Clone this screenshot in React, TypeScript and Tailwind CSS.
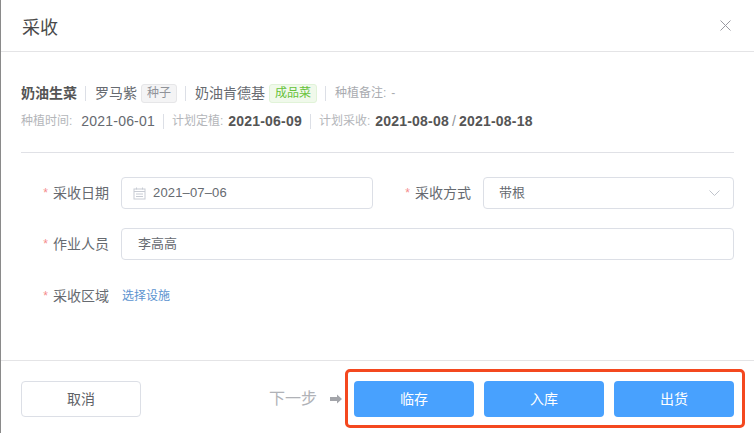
import React from 'react';

const FONT = "font-['Liberation_Sans','Noto_Sans_CJK_SC',sans-serif]";

const Sep = () => <span className="ml-[8px] mr-[9px] h-[15px] w-px bg-[#dcdfe6]" />;
const DateSep = () => <span className="ml-[8px] mr-[8px] h-[15px] w-px bg-[#dcdfe6]" />;

const Label = ({ text }: { text: string }) => (
  <div className="flex w-[88px] shrink-0 items-center justify-end pr-[12px] text-[14px] text-[#666a70]">
    <span className="mr-[5px] text-[12px] text-[#f58c8c]">*</span>
    {text}
  </div>
);

const App: React.FC = () => {
  return (
    <div className={`${FONT} flex h-[433px] w-[754px] flex-col overflow-hidden border-l border-[#8a8a8a] bg-white text-[#666a70]`}>
      <div className="flex h-[52px] shrink-0 items-center justify-between border-b border-[#e4e4e6] pl-[21px] pr-[23px]">
        <h1 className="pt-[5px] text-[18px] font-normal text-[#4a4a4a]">采收</h1>
        <svg width="11" height="11" viewBox="0 0 11 11" className="text-[#9a9aa2]">
          <path d="M0.5 0.5L10.5 10.5M10.5 0.5L0.5 10.5" stroke="currentColor" strokeWidth="1" fill="none" />
        </svg>
      </div>

      <div className="mx-[20px] shrink-0 border-b border-[#e0e1e6] pb-[19px] pt-[29px]">
        <div className="flex h-[24px] items-center text-[14px]">
          <span className="font-bold text-[#555]">奶油生菜</span>
          <Sep />
          <span>罗马紫</span>
          <span className="ml-[4px] flex h-[19px] w-[36px] items-center justify-center rounded-[3px] border border-[#e6e6e8] bg-[#f4f4f5] text-[12px] text-[#909399]">种子</span>
          <Sep />
          <span>奶油肯德基</span>
          <span className="ml-[4px] flex h-[19px] w-[48px] items-center justify-center rounded-[3px] border border-[#e1f3d8] bg-[#f0f9eb] text-[12px] text-[#67c23a]">成品菜</span>
          <Sep />
          <span className="text-[12px] text-[#a9abb0]">种植备注:</span>
          <span className="ml-[5px] text-[12px] text-[#a9abb0]">-</span>
        </div>
        <div className="mt-[4px] flex h-[24px] items-center text-[14px] tracking-[0.2px]">
          <span className="text-[12px] tracking-normal text-[#b4b6ba]">种植时间:</span>
          <span className="ml-[9px]">2021-06-01</span>
          <DateSep />
          <span className="text-[12px] tracking-normal text-[#b4b6ba]">计划定植:</span>
          <span className="ml-[5px] font-bold text-[#555]">2021-06-09</span>
          <DateSep />
          <span className="text-[12px] tracking-normal text-[#b4b6ba]">计划采收:</span>
          <span className="ml-[5px] font-bold text-[#555]">2021-08-08</span>
          <span className="mx-[3px] text-[#909399]">/</span>
          <span className="font-bold text-[#555]">2021-08-18</span>
        </div>
      </div>

      <div className="flex flex-1 flex-col border-b border-[#e4e4e6] pl-[32px] pr-[20px] pt-[24px]">
        <div className="flex h-[32px]">
          <Label text="采收日期" />
          <div className="flex w-[252px] items-center rounded-[4px] border border-[#dcdfe6] pl-[11px] text-[13px] tracking-[0.15px]">
            <svg width="13" height="13" viewBox="0 0 13 13" fill="none" stroke="#c8ccd4" strokeWidth="1">
              <rect x="1" y="2" width="11" height="10" />
              <path d="M1 4.5H12M3.5 0.5V2.5M9.5 0.5V2.5M3 7H10M3 9.5H10" />
            </svg>
            <span className="ml-[7px]">2021–07–06</span>
          </div>
          <div className="ml-[22px] flex w-[88px]">
            <Label text="采收方式" />
          </div>
          <div className="flex flex-1 items-center justify-between rounded-[4px] border border-[#dcdfe6] pl-[15px] pr-[13px] text-[13px]">
            <span>带根</span>
            <svg width="11" height="7" viewBox="0 0 11 7" fill="none" stroke="#c0c4cc" strokeWidth="1">
              <path d="M0.5 0.5L5.5 5.5L10.5 0.5" />
            </svg>
          </div>
        </div>
        <div className="mt-[19px] flex h-[32px]">
          <Label text="作业人员" />
          <div className="flex flex-1 items-center rounded-[4px] border border-[#dcdfe6] pl-[16px] text-[13px]">李高高</div>
        </div>
        <div className="mt-[26px] flex h-[20px] items-center">
          <Label text="采收区域" />
          <a className="ml-px text-[12px] text-[#5b93cf]">选择设施</a>
        </div>
      </div>

      <div className="flex h-[72px] shrink-0 items-center justify-between pl-[20px] pr-[9px] pt-[3px]">
        <button className="mt-px h-[36px] w-[120px] rounded-[4px] border border-[#dcdfe6] bg-white text-[14px] text-[#606266]">取消</button>
        <div className="flex items-center">
          <span className="text-[16px] text-[#b0b2b7]">下一步</span>
          <svg width="12" height="10" viewBox="0 0 12 10" className="ml-[13px] mr-[3px]">
            <path d="M0 3H7V0.5L12 5L7 9.5V7H0Z" fill="#a3a5aa" />
          </svg>
          <div className="flex h-[59px] items-start gap-[10px] rounded-[5px] border-[3px] border-[#f4481f] pl-[6px] pr-[8px] pt-[9px]">
            <button className="h-[36px] w-[120px] rounded-[4px] bg-[#48a1fe] text-[14px] text-white">临存</button>
            <button className="h-[36px] w-[120px] rounded-[4px] bg-[#48a1fe] text-[14px] text-white">入库</button>
            <button className="h-[36px] w-[120px] rounded-[4px] bg-[#48a1fe] text-[14px] text-white">出货</button>
          </div>
        </div>
      </div>
    </div>
  );
};

export default App;
